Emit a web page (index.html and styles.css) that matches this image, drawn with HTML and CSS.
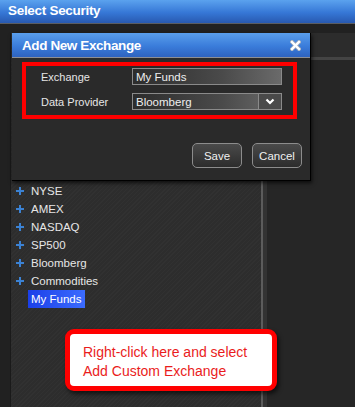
FILE: index.html
```html
<!DOCTYPE html>
<html>
<head>
    <title>Select Security</title>
    <link rel="stylesheet" href="styles.css">
</head>
<body>
    <div class="topbar">Select Security</div>

    <div class="workspace">
        <!-- Tree of exchanges -->
        <div class="left-col">
            <div class="tree-panel">
                <ul class="tree">
                    <li><span class="plus"></span><span class="label">NYSE</span></li>
                    <li><span class="plus"></span><span class="label">AMEX</span></li>
                    <li><span class="plus"></span><span class="label">NASDAQ</span></li>
                    <li><span class="plus"></span><span class="label">SP500</span></li>
                    <li><span class="plus"></span><span class="label">Bloomberg</span></li>
                    <li><span class="plus"></span><span class="label">Commodities</span></li>
                    <li><span class="spacer"></span><span class="label selected">My Funds</span></li>
                </ul>
            </div>
        </div>

        <!-- Details side -->
        <div class="right-col">
            <div class="right-head"></div>
        </div>
    </div>

    <!-- Dialog -->
    <div class="dialog">
        <div class="dialog-title">
            <span>Add New Exchange</span>
            <svg class="close" width="11" height="11" viewBox="0 0 11 11">
                <path d="M2 2 L9 9 M9 2 L2 9" stroke="#9aa6b8" stroke-width="4" stroke-linecap="square"/>
                <path d="M2 2 L9 9 M9 2 L2 9" stroke="#ffffff" stroke-width="2.4" stroke-linecap="square"/>
            </svg>
        </div>
        <div class="dialog-body">
            <div class="highlight-box">
                <div class="field">
                    <label>Exchange</label>
                    <div class="input">My Funds</div>
                </div>
                <div class="field">
                    <label>Data Provider</label>
                    <div class="input select">
                        <span class="value">Bloomberg</span>
                        <span class="arrow">
                            <svg width="10" height="7" viewBox="0 0 10 7">
                                <path d="M1.5 1.5 L5 5 L8.5 1.5" fill="none" stroke="#ffffff" stroke-width="2.2"/>
                            </svg>
                        </span>
                    </div>
                </div>
            </div>
            <div class="actions">
                <button>Save</button>
                <button>Cancel</button>
            </div>
        </div>
    </div>

    <!-- Annotation -->
    <div class="callout">Right-click here and select<br>Add Custom Exchange</div>
</body>
</html>
```

FILE: styles.css
```css
body { margin: 0; width: 355px; height: 407px; overflow: hidden; background: #232323; font-family: "Liberation Sans", Arial, sans-serif; font-size: 11px; color: #e6e6e6; }

.topbar { height: 23px; line-height: 22px; padding-left: 8px; border-bottom: 1px solid #5a5d63; background: linear-gradient(#5ba2ee, #3677d6 55%, #2859b0); color: #fff; font-size: 13.5px; font-weight: bold; letter-spacing: -0.3px; }

.workspace { display: flex; height: 383px; padding-top: 9px; box-sizing: border-box; background: #212121; }
.left-col { width: 261px; padding-left: 10px; box-sizing: border-box; display: flex; }
.tree-panel { flex: 1; padding-top: 149px; border-left: 1px solid #1a1a1a; background: #2d2d2d repeating-linear-gradient(135deg, rgba(255,255,255,0.02) 0 1px, transparent 1px 3px); }
.right-col { flex: 1; border-left: 2px solid #5c5c5c; box-shadow: inset 4px 0 0 #333; background: #262626; }
.right-head { height: 24px; border-bottom: 3px solid #444; background: #2c2c2c; }

.tree { list-style: none; margin: 0; padding: 0; }
.tree li { display: flex; align-items: center; height: 18px; padding-left: 5px; }
.plus { position: relative; width: 8px; height: 8px; margin-right: 4px; }
.plus::before, .plus::after { content: ""; position: absolute; background: #3b82d4; }
.plus::before { left: 0; top: 3px; width: 8px; height: 2px; }
.plus::after { left: 3px; top: 0; width: 2px; height: 8px; }
.spacer { width: 12px; }
.label { padding: 0 3px; line-height: 18px; font-size: 11.5px; }
.label.selected { background: linear-gradient(90deg, #1b3fe8, #3b6cff); color: #fff; }

.dialog { position: absolute; left: 12px; top: 33px; width: 299px; height: 148px; box-sizing: border-box; background: #2a2a2a; border-right: 1px solid #000; border-bottom: 1px solid #000; box-shadow: 1px 2px 4px rgba(0,0,0,0.7); }
.dialog-title { display: flex; justify-content: space-between; align-items: center; height: 24px; padding: 0 9px 0 10px; border-bottom: 1px solid #8d8f94; background: linear-gradient(#5a9fec, #3a7cda 55%, #2e63bf); color: #fff; font-size: 13.5px; font-weight: bold; letter-spacing: -0.4px; }
.close { display: block; }
.dialog-body { padding: 4px 0 0 10px; }

.highlight-box { width: 275px; box-sizing: border-box; border: 4px solid #f00; padding: 2px 11px 5px 15px; display: flex; flex-direction: column; gap: 8px; }
.field { display: flex; align-items: center; }
.field label { width: 91px; }
.input { display: flex; align-items: center; width: 150px; height: 17px; box-sizing: border-box; padding-left: 3px; border: 1px solid #8a8a8a; background: linear-gradient(90deg, #2c2c2c, #4a4a4a 60%, #6a6a6a); color: #eee; font-size: 11.5px; }
.select { padding-right: 0; }
.select .value { flex: 1; }
.arrow { display: flex; align-items: center; justify-content: center; width: 22px; height: 100%; border-left: 1px solid #8a8a8a; background: #4a4a4a; }

.actions { display: flex; justify-content: flex-end; gap: 10px; margin-top: 24px; padding-right: 8px; }
button { width: 50px; height: 25px; padding: 0; border: 1px solid #8c8c8c; border-radius: 5px; background: linear-gradient(#4a4a4a, #2c2c2c); color: #f0f0f0; font-family: "Liberation Sans", Arial, sans-serif; font-size: 11.5px; }

.callout { position: absolute; left: 65px; top: 329px; width: 212px; height: 62px; box-sizing: border-box; padding: 9px 0 0 13px; border: 5px solid #f00; border-radius: 9px; background: #fff; box-shadow: 2px 3px 4px rgba(0,0,0,0.6); color: #ea1c1c; font-size: 14px; line-height: 19px; }
```
